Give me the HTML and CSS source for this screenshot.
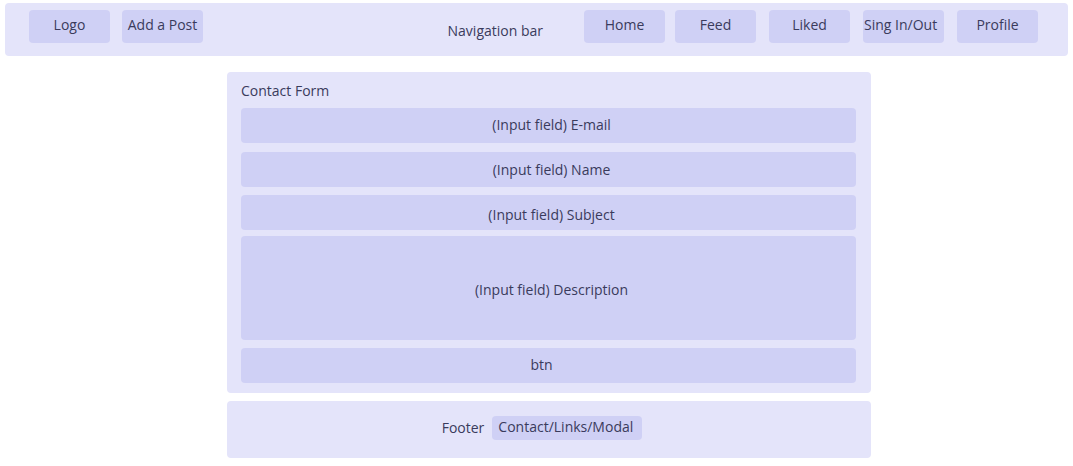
FILE: index.html
```html
<!DOCTYPE html>
<html>
<head>
<meta charset="utf-8">
<link rel="stylesheet" href="styles.css">
</head>
<body>
<header class="nav">
  <div class="nav-group">
    <div class="nav-btn">Logo</div>
    <div class="nav-btn">Add a Post</div>
  </div>
  <div class="nav-title">Navigation bar</div>
  <div class="nav-group nav-right">
    <div class="nav-btn">Home</div>
    <div class="nav-btn b-feed">Feed</div>
    <div class="nav-btn b-liked">Liked</div>
    <div class="nav-btn b-sign">Sing In/Out</div>
    <div class="nav-btn b-profile">Profile</div>
  </div>
</header>
<main class="form">
  <div class="form-title">Contact Form</div>
  <div class="field f-email">(Input field) E-mail</div>
  <div class="field f-name">(Input field) Name</div>
  <div class="field f-subject">(Input field) Subject</div>
  <div class="field f-desc">(Input field) Description</div>
  <div class="field f-btn">btn</div>
</main>
<footer class="footer">
  <span class="footer-label">Footer</span>
  <span class="footer-pill">Contact/Links/Modal</span>
</footer>
</body>
</html>
```
FILE: styles.css
```css
* { box-sizing: border-box; }
html, body { background: #ffffff; }
body {
  margin: 0;
  padding: 3px 5px;
  font-family: "Open Sans", "Noto Sans", sans-serif;
  font-size: 14px;
  color: #3a3b5c;
}
.nav {
  display: flex;
  align-items: flex-start;
  height: 53px;
  padding: 7px 30px 0 24px;
  background: #e4e4fa;
  border-radius: 4px;
}
.nav-group {
  display: flex;
  gap: 12px;
}
.nav-right { gap: 0; }
.nav-btn {
  width: 81px;
  height: 33px;
  line-height: 30px;
  text-align: center;
  background: #cfd0f5;
  border-radius: 4px;
  white-space: nowrap;
}
.b-feed { margin-left: 10px; }
.b-liked { margin-left: 13px; }
.b-sign { margin-left: 13px; text-align: left; padding-left: 1px; }
.b-profile { margin-left: 13px; }
.nav-title {
  margin-left: auto;
  margin-right: 41px;
  margin-top: 11px;
  line-height: 20px;
}
.form {
  margin: 16px 0 0 222px;
  width: 644px;
  padding: 9px 15px 10px 14px;
  background: #e4e4fa;
  border-radius: 4px;
}
.form-title {
  line-height: 20px;
  margin-bottom: 7px;
}
.field {
  display: flex;
  align-items: center;
  justify-content: center;
  height: 35px;
  padding-left: 6px;
  background: #cfd0f5;
  border-radius: 4px;
}
.f-email { padding-bottom: 2px; }
.f-name { margin-top: 9px; }
.f-subject { margin-top: 8px; padding-top: 4px; }
.f-desc { margin-top: 6px; height: 104px; padding-top: 2px; }
.f-btn { margin-top: 8px; padding-left: 0; padding-right: 14px; padding-bottom: 2px; }
.footer {
  margin: 8px 0 0 222px;
  width: 644px;
  height: 57px;
  display: flex;
  align-items: center;
  justify-content: center;
  gap: 8px;
  padding-right: 14px;
  padding-bottom: 3px;
  background: #e4e4fa;
  border-radius: 4px;
}
.footer-pill {
  height: 24px;
  line-height: 22px;
  padding: 0 9px 0 6px;
  background: #cfd0f5;
  border-radius: 4px;
}
.footer-label { line-height: 20px; }
```
